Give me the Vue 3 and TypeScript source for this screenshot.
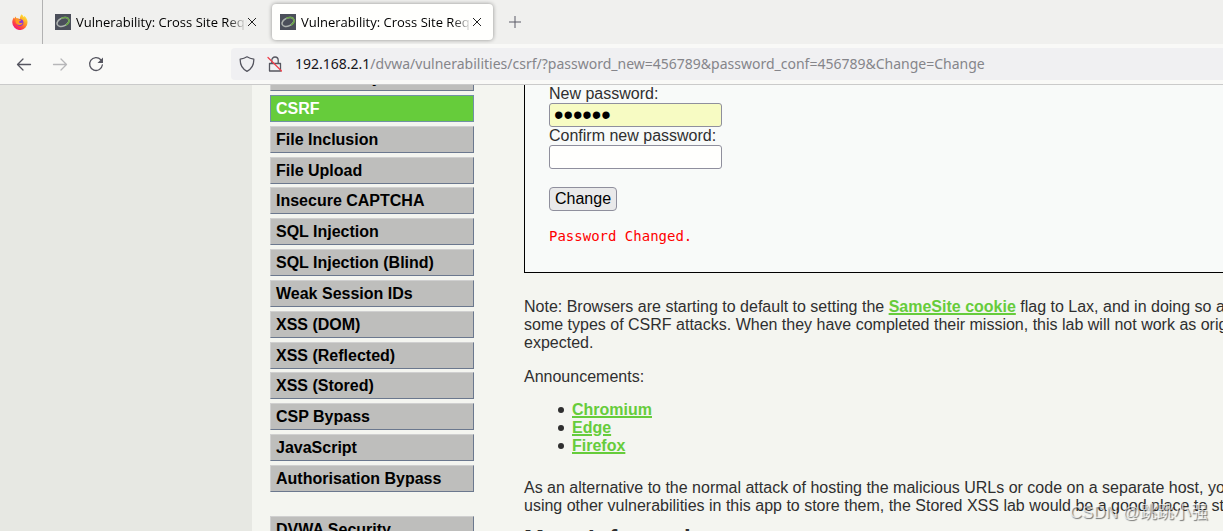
<script setup lang="ts">
import { ref } from 'vue'

interface Tab {
  title: string
  active: boolean
}

const tabs: Tab[] = [
  { title: 'Vulnerability: Cross Site Request Forgery', active: false },
  { title: 'Vulnerability: Cross Site Request Forgery', active: true },
]

const menu: string[] = [
  'Command Injection',
  'CSRF',
  'File Inclusion',
  'File Upload',
  'Insecure CAPTCHA',
  'SQL Injection',
  'SQL Injection (Blind)',
  'Weak Session IDs',
  'XSS (DOM)',
  'XSS (Reflected)',
  'XSS (Stored)',
  'CSP Bypass',
  'JavaScript',
  'Authorisation Bypass',
]

const announcements: string[] = ['Chromium', 'Edge', 'Firefox']
const newPassword = ref('456789')
const confirmPassword = ref('')
</script>

<template>
  <div class="window">
    <header class="tabbar">
      <button class="pinned" aria-label="Firefox">
        <svg width="16" height="16" viewBox="0 0 16 16">
          <defs>
            <linearGradient id="flame" x1="0.85" y1="0.1" x2="0.25" y2="0.95">
              <stop offset="0" stop-color="#ffe93c" />
              <stop offset="0.4" stop-color="#ff9a22" />
              <stop offset="0.75" stop-color="#ff4043" />
              <stop offset="1" stop-color="#f0157a" />
            </linearGradient>
          </defs>
          <path d="M9.6 0.2c1 .7 1.6 1.700 1.900 2.700.5-.2.800-.5 1-.9 1.800 1.500 3.100 3.800 3 6.400a7.600 7.600 0 0 1-15.200.1c0-2 .6-3.600 1.600-4.900l.3 1.100c.4-.9 1-1.700 1.700-2.200l.3 1.800c1.500-.4 2.700.1 3.500.9.300-1.900.7-3.700 1.900-5z" fill="url(#flame)" />
          <circle cx="8" cy="8.600" r="3.400" fill="#8a36d8" />
          <path d="M3.500 5.200c1.300-.8 3-.6 4 .5l1.700.3c-.2.900-1.200 1.100-1.900 1.300-.4.600-.2 1.300.5 1.600 1.100.4 1.900-.4 2.800-.1-.3 1.400-1.600 2.200-3 2.200-2.400 0-4-1.600-4.100-3.800z" fill="#ff9a22" />
        </svg>
      </button>
      <div v-for="(tab, i) in tabs" :key="i" class="tab" :class="{ active: tab.active }">
        <svg class="favicon" width="16" height="16" viewBox="0 0 16 16">
          <rect width="16" height="16" fill="#4b4f5a" />
          <g fill="none" transform="rotate(-24 8 8)">
            <ellipse cx="8" cy="8" rx="6.300" ry="4" stroke="#aeb4b0" stroke-width="1.500" />
            <path d="M8 4c3.600 0 6.300 1.800 6.300 4s-2.300 3.700-5 4" stroke="#69a545" stroke-width="1.500" />
          </g>
        </svg>
        <span class="title">{{ tab.title }}</span>
        <button class="close" aria-label="Close tab">
          <svg width="10" height="10" viewBox="0 0 10 10"><path d="M1 1l8 8M9 1l-8 8" /></svg>
        </button>
      </div>
      <button class="newtab" aria-label="New tab">
        <svg width="14" height="14" viewBox="0 0 14 14"><path d="M7 1v12M1 7h12" /></svg>
      </button>
    </header>

    <div class="toolbar">
      <button aria-label="Back">
        <svg width="16" height="16" viewBox="0 0 16 16"><path d="M14.500 8.500H1.500M7 3L1.500 8.500 7 14" /></svg>
      </button>
      <button aria-label="Forward" disabled>
        <svg width="16" height="16" viewBox="0 0 16 16"><path d="M1.500 8.500h13M9 3l5.500 5.500L9 14" /></svg>
      </button>
      <button aria-label="Reload">
        <svg width="16" height="16" viewBox="0 0 16 16">
          <path d="M12.800 3.800A6.400 6.400 0 1 0 14.400 8.800" />
          <path class="solid" d="M15 1.500v5.500H9.500z" />
        </svg>
      </button>
      <div class="address">
        <svg width="16" height="16" viewBox="0 0 16 16">
          <path d="M8 .8c2 1.300 4.300 2 6.800 2.300C15 8.500 12.800 13 8 15.300 3.200 13 1 8.500 1.200 3.100 3.700 2.800 6 2.100 8 .8z" />
        </svg>
        <svg width="16" height="16" viewBox="0 0 16 16">
          <path d="M2.500 7.500h11v7.500h-11zM4.800 7.500V4.200a3.200 3.200 0 0 1 6.400 0v3.300" />
          <path class="slash" d="M1 1.500l13.500 13.500" />
        </svg>
        <span class="url"><b>192.168.2.1</b>/dvwa/vulnerabilities/csrf/?password_new=456789&amp;password_conf=456789&amp;Change=Change</span>
      </div>
    </div>

    <div class="viewport">
      <div class="page">
        <nav>
          <ul class="group">
            <li v-for="item in menu" :key="item">
              <a href="#" :class="{ selected: item === 'CSRF' }">{{ item }}</a>
            </li>
          </ul>
          <ul>
            <li><a href="#">DVWA Security</a></li>
          </ul>
        </nav>
        <main>
          <form class="panel" @submit.prevent>
            <label for="new">New password:</label>
            <input id="new" v-model="newPassword" class="filled" type="password" />
            <label for="confirm">Confirm new password:</label>
            <input id="confirm" v-model="confirmPassword" type="password" />
            <button type="submit">Change</button>
            <pre>Password Changed.</pre>
          </form>
          <p>
            Note: Browsers are starting to default to setting the <a href="#">SameSite cookie</a> flag to Lax, and in doing so are<br />
            some types of CSRF attacks. When they have completed their mission, this lab will not work as originally<br />
            expected.
          </p>
          <p>Announcements:</p>
          <ul>
            <li v-for="name in announcements" :key="name"><a href="#">{{ name }}</a></li>
          </ul>
          <p>
            As an alternative to the normal attack of hosting the malicious URLs or code on a separate host, you could<br />
            using other vulnerabilities in this app to store them, the Stored XSS lab would be a good place to start
          </p>
          <h2>More Information</h2>
        </main>
      </div>
    </div>
    <div class="watermark">CSDN @跳跳小强</div>
  </div>
</template>

<style>
body {
  margin: 0;
}
</style>

<style scoped>
.window {
  position: relative;
  display: flex;
  flex-direction: column;
  height: 100vh;
  overflow: hidden;
  font-family: "Liberation Sans", Arial, sans-serif;
  font-size: 16px;
  line-height: 18px;
  color: #2f2f2f;
}
button {
  font: inherit;
}
svg {
  display: block;
  flex: none;
}
.tabbar {
  display: flex;
  flex: none;
  align-items: center;
  height: 44px;
  background: #f0f0ee;
  font-family: "Open Sans", sans-serif;
  font-size: 13px;
  color: #000;
}
.tabbar button,
.toolbar button {
  display: grid;
  place-items: center;
  padding: 0;
  border: 0;
  background: none;
}
.tabbar .pinned {
  width: 43px;
  height: 44px;
  padding-right: 3px;
  border-right: 1px solid #b2b2b2;
}
.tab {
  display: flex;
  align-items: center;
  box-sizing: border-box;
  width: 221px;
  height: 36px;
  margin-left: 4px;
  padding: 0 11px 0 8px;
  border-radius: 4px;
}
.tab.active {
  background: #fffffd;
  box-shadow: 0 0 4px #00000066;
}
.title {
  flex: 1;
  margin-left: 5px;
  overflow: hidden;
  white-space: nowrap;
  mask-image: linear-gradient(to left, transparent, #000 20px);
}
.close svg,
.newtab svg {
  fill: none;
  stroke: #222;
  stroke-width: 1;
}
.tabbar .newtab {
  margin-left: 15px;
}
.newtab svg {
  stroke: #5b5b66;
}
.toolbar {
  display: flex;
  flex: none;
  align-items: center;
  box-sizing: border-box;
  height: 41px;
  padding-left: 16px;
  gap: 20px;
  background: #f9f9f7;
  border-bottom: 1px solid #cacaca;
}
.toolbar svg {
  fill: none;
  stroke: #55555f;
  stroke-width: 1.3;
  stroke-linecap: round;
  stroke-linejoin: round;
}
.toolbar button:disabled {
  opacity: 0.4;
}
.toolbar .solid {
  fill: #55555f;
  stroke: none;
}
.toolbar .slash {
  stroke: #f0404c;
}
.address {
  display: flex;
  flex: 1;
  align-items: center;
  gap: 12px;
  height: 32px;
  margin-left: 107px;
  padding-left: 8px;
  border-radius: 4px 0 0 4px;
  background: #f0f0f2;
  font-family: "Noto Sans", sans-serif;
  font-size: 14px;
  color: #85858a;
  white-space: nowrap;
  overflow: hidden;
}
.url b {
  font-weight: 400;
  color: #15141a;
}
.viewport {
  flex: 1;
  min-height: 0;
  overflow: hidden;
  padding-left: 252px;
  background: #e7e8e3;
}
.page {
  display: flex;
  min-height: 100%;
  background: #f4f5f0;
}
nav {
  flex: none;
  width: 204px;
  margin: -21px 50px 0 18px;
  font-weight: 700;
}
nav ul {
  margin: 0 0 24px;
  padding: 0;
  list-style: none;
}
nav .group {
  display: flex;
  flex-direction: column;
  justify-content: space-between;
  height: 428px;
}
nav a {
  display: block;
  padding: 4px 5px 3px;
  border: 1px solid;
  border-color: #d0d0d0 #6b788e #6b788e #d0d0d0;
  background: #bebebc;
  color: #000;
  text-decoration: none;
}
nav a.selected {
  border-color: #7191a5;
  background: #66cc3b;
  color: #fff;
}
main {
  flex: 1;
  min-width: 0;
  white-space: nowrap;
}
.panel {
  display: flex;
  flex-direction: column;
  align-items: flex-start;
  padding: 0 24px 27px;
  border: solid #000;
  border-width: 0 0 1px 1px;
  background: #f8faf9;
}
.panel input {
  box-sizing: border-box;
  width: 173px;
  height: 24px;
  padding: 0 4px;
  border: 1px solid #8f8f9d;
  border-radius: 3px;
  background: #fffffd;
  font: inherit;
  color: #000;
}
.panel .filled {
  background: #f7fbc3;
  font-size: 27px;
}
.panel button {
  height: 24px;
  margin-top: 18px;
  padding: 0 5px;
  border: 1px solid #8f8f9d;
  border-radius: 4px;
  background: #e9e9ea;
  color: #000;
}
.panel pre {
  margin: 16px 0 0;
  font-family: "DejaVu Sans Mono", monospace;
  font-size: 14px;
  color: #f00;
}
main p {
  margin: 0 0 16px;
}
.panel + p {
  margin-top: 25px;
}
main ul {
  margin: -1px 0 24px;
  padding-left: 48px;
  list-style: none;
}
main li::before {
  content: "";
  display: inline-block;
  width: 6px;
  height: 6px;
  margin: 0 8px 2px -14px;
  border-radius: 50%;
  background: #2f2f2f;
}
main p a,
main li a {
  font-weight: 700;
  color: #66cc3b;
  text-decoration-thickness: 2px;
}
h2 {
  margin: 0;
  font-size: 24px;
  line-height: 16px;
}
.watermark {
  position: absolute;
  right: 15px;
  bottom: 6px;
  font-family: "Liberation Sans", "Noto Sans CJK SC", sans-serif;
  font-size: 17px;
  line-height: 24px;
  color: #ffffffaa;
  text-shadow: 1px 1px 1px #00000088;
}
</style>
